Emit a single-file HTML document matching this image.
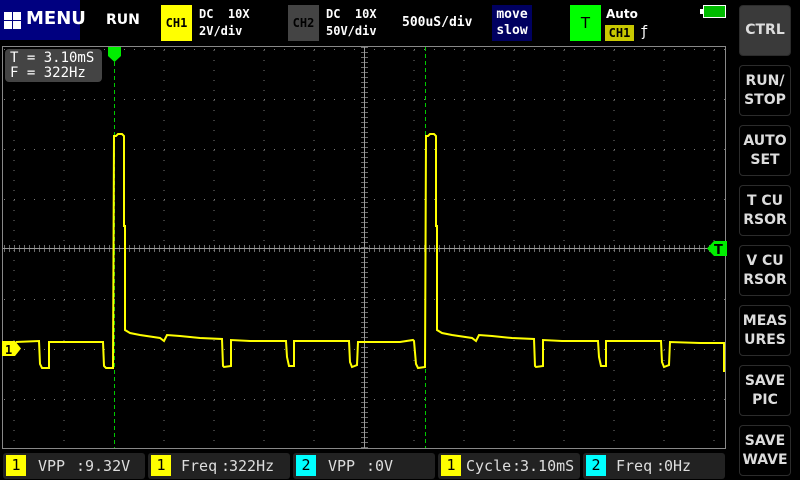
<!DOCTYPE html><html><head><style>
*{margin:0;padding:0;box-sizing:border-box}
body{width:800px;height:480px;background:#000;position:relative;overflow:hidden;font-family:"DejaVu Sans Mono","Liberation Mono",monospace;color:#fff}
.a{position:absolute}
.btn{position:absolute;left:739px;width:52px;height:51px;border:1px solid #2c2c2c;border-radius:4px;color:#ddd;font:bold 14px "DejaVu Sans",sans-serif;display:flex;align-items:center;justify-content:center;text-align:center;line-height:19px}
.m{position:absolute;top:453px;height:26px;width:142px;background:#222;border-radius:3px;color:#ddd;font-size:15px;line-height:26px}
.m .n{position:absolute;left:3px;top:2px;width:20px;height:21px;color:#000;text-align:center;line-height:21px;font-size:15px}
.m span{position:absolute;top:0;white-space:pre}
.s{font-size:12px;font-weight:bold;position:absolute;white-space:pre}
</style></head><body>
<div class="a" style="left:0;top:0;width:80px;height:40px;background:#000080"></div>
<div class="a" style="left:4px;top:12px;width:8px;height:8px;background:#fff"></div>
<div class="a" style="left:13px;top:12px;width:8px;height:8px;background:#fff"></div>
<div class="a" style="left:4px;top:21px;width:8px;height:8px;background:#fff"></div>
<div class="a" style="left:13px;top:21px;width:8px;height:8px;background:#fff"></div>
<div class="a" style="left:26px;top:8px;font:bold 18px 'DejaVu Sans',sans-serif">MENU</div>
<div class="a" style="left:106px;top:12px;font:bold 14px 'DejaVu Sans',sans-serif">RUN</div>
<div class="a" style="left:161px;top:5px;width:31px;height:36px;background:#ff0;color:#000;font-size:12px;font-weight:bold;text-align:center;line-height:36px">CH1</div>
<div class="s" style="left:199px;top:7px">DC  10X</div><div class="s" style="left:199px;top:24px">2V/div</div>
<div class="a" style="left:288px;top:5px;width:31px;height:36px;background:#444;color:#000;font-size:12px;font-weight:bold;text-align:center;line-height:36px">CH2</div>
<div class="s" style="left:326px;top:7px">DC  10X</div><div class="s" style="left:326px;top:24px">50V/div</div>
<div class="s" style="left:402px;top:15px;font-size:13px">500uS/div</div>
<div class="a" style="left:492px;top:5px;width:40px;height:36px;background:#000060;font-size:13px;font-weight:bold;text-align:center;line-height:16px;padding-top:2px">move<br>slow</div>
<div class="a" style="left:570px;top:5px;width:31px;height:36px;background:#0f0;color:#000;font:15px 'DejaVu Sans',sans-serif;text-align:center;line-height:36px">T</div>
<div class="a" style="left:606px;top:7px;font:bold 12px 'DejaVu Sans',sans-serif">Auto</div>
<div class="a" style="left:605px;top:25px;width:29px;height:16px;background:#c8c800;color:#000;font-size:12px;font-weight:bold;text-align:center;line-height:16px">CH1</div>
<div class="a" style="left:640px;top:24px;font-size:14px">ƒ</div>
<div class="a" style="left:703px;top:5px;width:23px;height:13px;background:#0b0;border:1px solid #fff"></div>
<div class="a" style="left:700px;top:9px;width:3px;height:5px;background:#fff"></div>
<svg class="a" style="left:0;top:0" width="800" height="480">
<rect x="2.5" y="46.5" width="723" height="402" fill="none" stroke="#888" stroke-width="1"/>
<g stroke="#777" stroke-width="1" stroke-dasharray="1 9">
<path d="M14 50V448M64 50V448M164 50V448M214 50V448M264 50V448M314 50V448M414 50V448M464 50V448M514 50V448M564 50V448M614 50V448M664 50V448M714 50V448"/>
<path d="M4 49.5H725M4 99.5H725M4 149.5H725M4 199.5H725M4 299.5H725M4 349.5H725M4 399.5H725"/>
</g>
<path d="M3 248.5H725M364.5 47V448" stroke="#999" stroke-width="1"/>
<g stroke="#999" stroke-width="1">
<path d="M4 248.5H725" stroke-dasharray="1 4" stroke-width="7" stroke-opacity="0.7"/>
<path d="M364.5 47V448" stroke-dasharray="1 4" stroke-width="7" stroke-opacity="0.7"/>
</g>
<path d="M114.5 62V448M425.5 47V448" stroke="#0c0" stroke-width="1" stroke-dasharray="4 3"/>
<polyline fill="none" stroke="#ff0" stroke-width="2" points="16,342 39,341 40,364 42,368 49,368 49,342 103,342 104,366 106,368 113,368 114,136 116,136 118,134 122,134 124,136 124,226 125,226 125,330 130,333 140,335 160,338 164,341 167,335 180,336 200,338 222,339 223,366 224,367 231,366 231,340 250,341 286,341 287,357 289,366 294,366 294,341 320,341 349,341 350,362 352,367 357,365 358,342 400,342 413,340 414,341 416,364 418,368 425,367 426,136 428,136 430,134 434,134 436,136 436,226 437,226 437,330 442,333 452,335 472,338 476,341 479,335 492,336 512,338 534,339 535,366 536,367 543,366 543,340 562,341 598,341 599,357 601,366 606,366 606,341 632,341 661,341 662,362 664,367 669,365 670,342 700,343 724,343 724,372"/>
<path d="M108 47H121V56L114.5 62L108 56Z" fill="#0e0"/>
<path d="M707 248.5L714 241H727V256H714Z" fill="#0e0"/>
<text x="714" y="254" font-family="DejaVu Sans" font-size="13" font-weight="bold" fill="#000">T</text>
<path d="M2 341H15L21 348.5L15 356H2Z" fill="#ff0"/>
<text x="5" y="354" font-family="DejaVu Sans Mono" font-size="12" font-weight="bold" fill="#000">1</text>
</svg>
<div class="a" style="left:5px;top:49px;width:97px;height:33px;background:#444;border-radius:4px;font-size:14px;line-height:15px;padding:2px 0 0 5px;white-space:pre">T = 3.10mS
F = 322Hz</div>
<div class="btn" style="top:5px;background:#3a3a3a">CTRL</div>
<div class="btn" style="top:65px">RUN/<br>STOP</div>
<div class="btn" style="top:125px">AUTO<br>SET</div>
<div class="btn" style="top:185px">T CU<br>RSOR</div>
<div class="btn" style="top:245px">V CU<br>RSOR</div>
<div class="btn" style="top:305px">MEAS<br>URES</div>
<div class="btn" style="top:365px">SAVE<br>PIC</div>
<div class="btn" style="top:425px">SAVE<br>WAVE</div>
<div class="m" style="left:3px"><div class="n" style="background:#ff0">1</div><span style="left:35px">VPP</span><span style="left:73px">:</span><span style="left:82px">9.32V</span></div>
<div class="m" style="left:148px"><div class="n" style="background:#ff0">1</div><span style="left:33px">Freq</span><span style="left:73px">:</span><span style="left:81px">322Hz</span></div>
<div class="m" style="left:293px"><div class="n" style="background:#0ff">2</div><span style="left:35px">VPP</span><span style="left:73px">:</span><span style="left:82px">0V</span></div>
<div class="m" style="left:438px"><div class="n" style="background:#ff0">1</div><span style="left:28px">Cycle</span><span style="left:74px">:</span><span style="left:82px">3.10mS</span></div>
<div class="m" style="left:583px"><div class="n" style="background:#0ff">2</div><span style="left:33px">Freq</span><span style="left:73px">:</span><span style="left:81px">0Hz</span></div>
</body></html>
